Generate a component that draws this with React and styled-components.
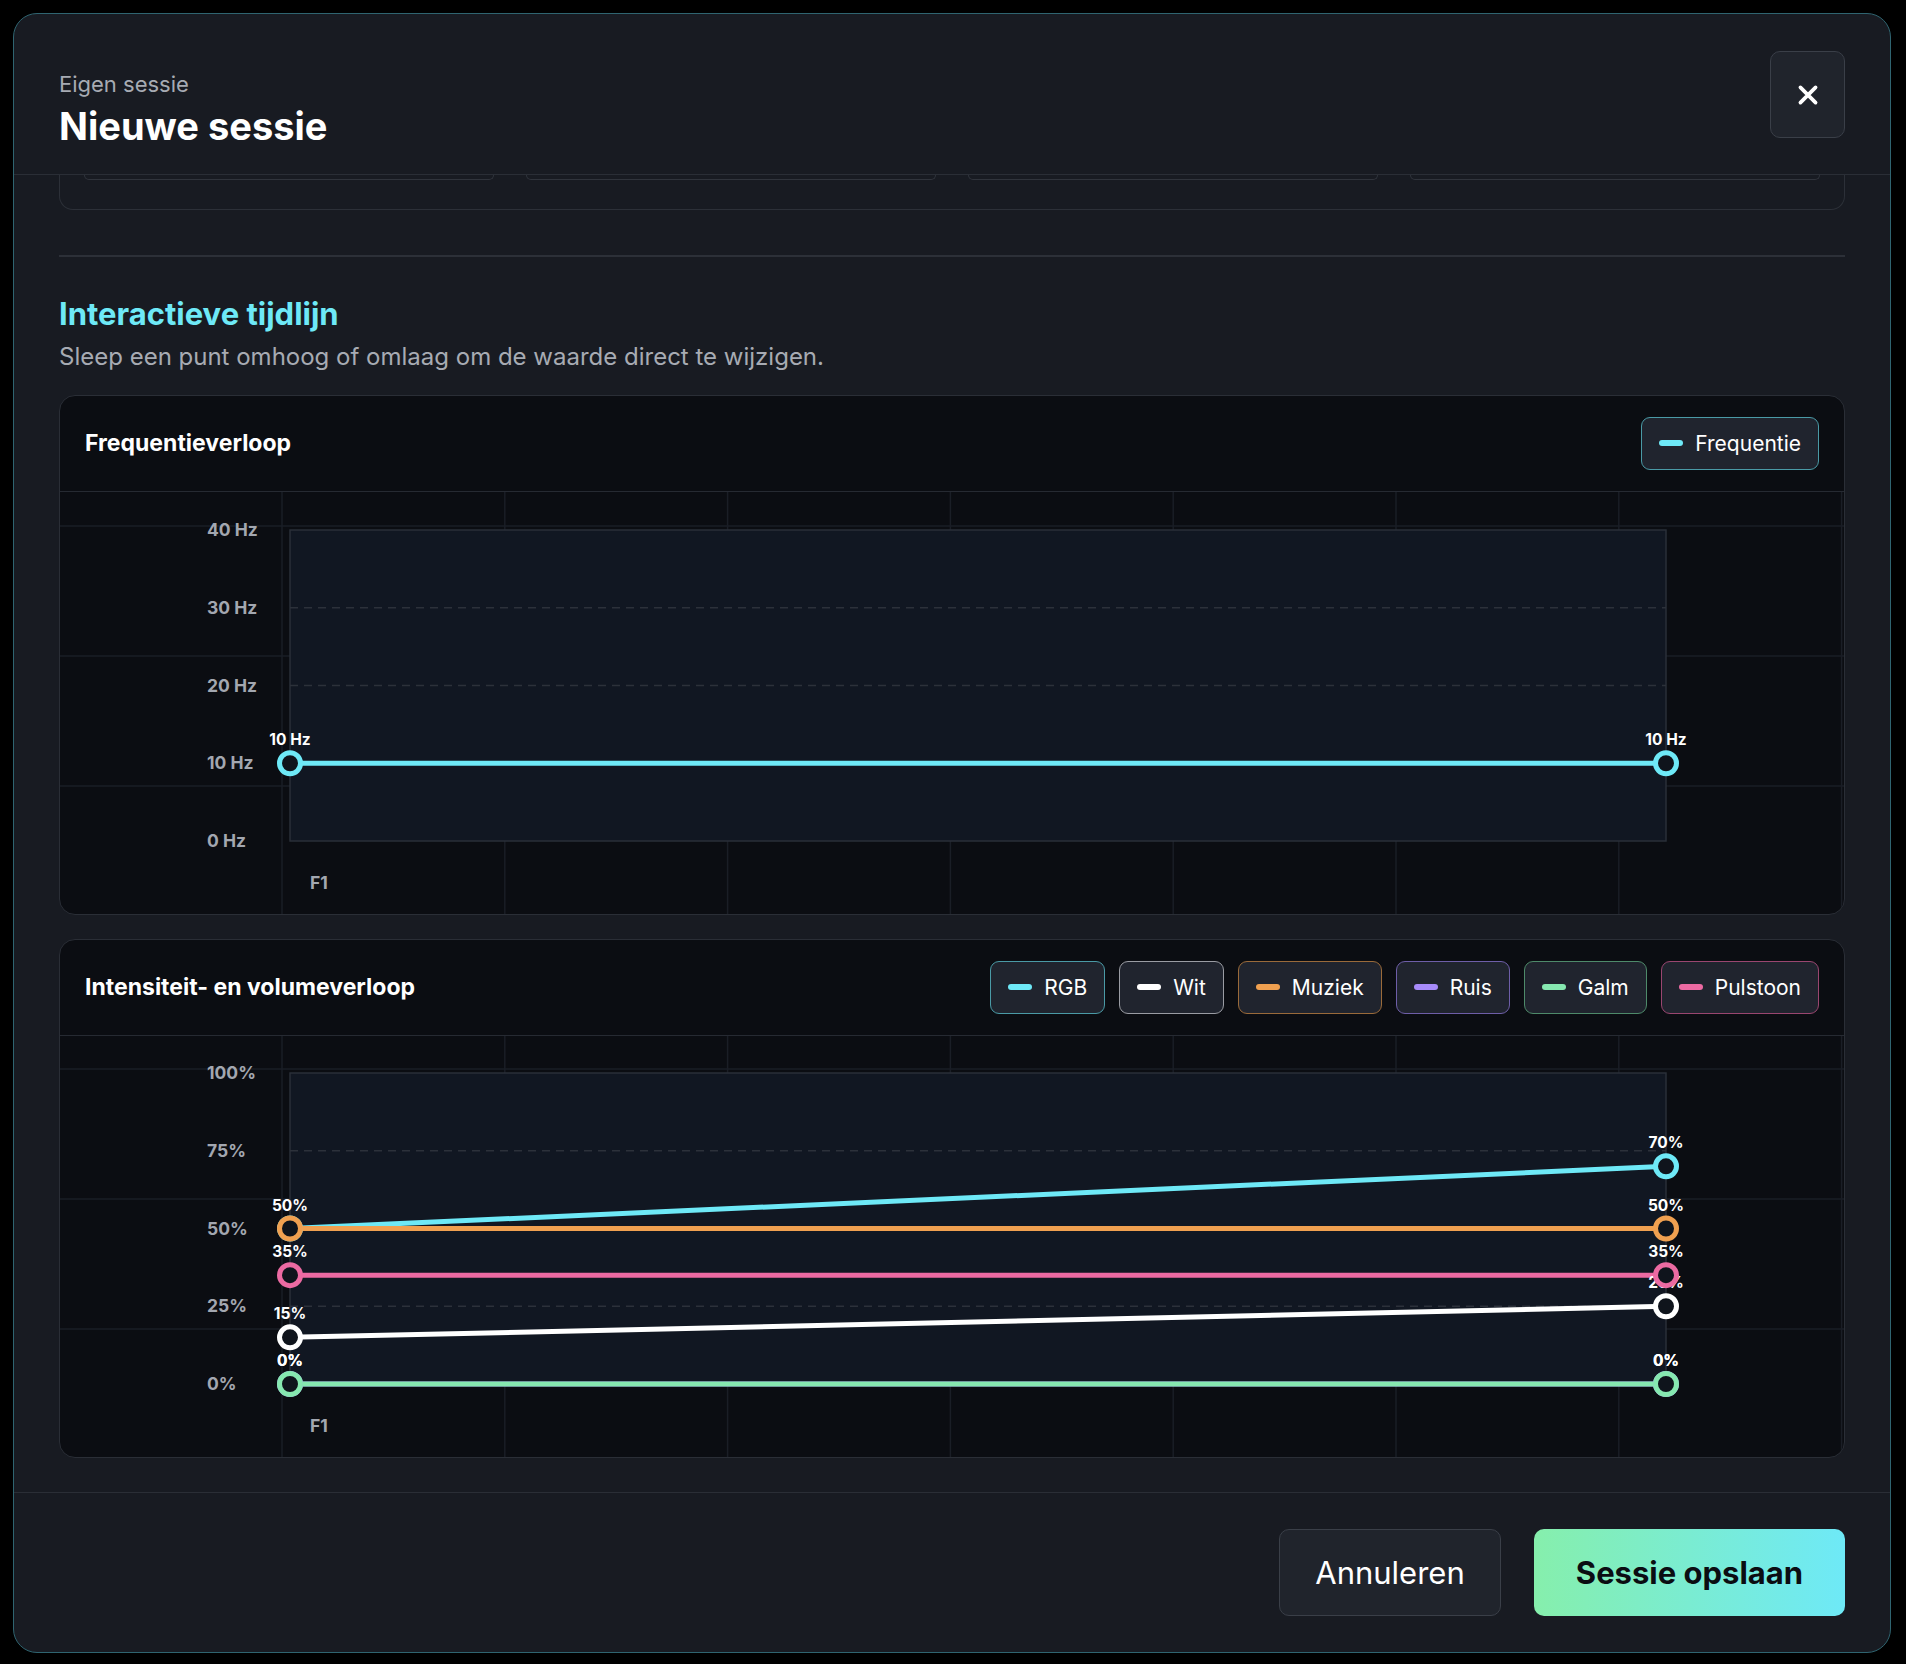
import styled, { createGlobalStyle } from 'styled-components';

const GlobalStyle = createGlobalStyle`
    html, body { margin: 0; background: #000; }
    body { font-family: Inter, "Noto Sans", sans-serif; color: #fff; }
`;

const W = 1787;
const PX0 = 230;
const PX1 = 1606;

const series = [
    { key: 'rgb', color: '#6ee9f7', from: 50, to: 70 },
    { key: 'ruis', color: '#a78bfa', from: 0, to: 0 },
    { key: 'galm', color: '#86e8b0', from: 0, to: 0 },
    { key: 'wit', color: '#ffffff', from: 15, to: 25 },
    { key: 'pulstoon', color: '#ec6aa2', from: 35, to: 35 },
    { key: 'muziek', color: '#f0a050', from: 50, to: 50 },
];

const legend = [
    { label: 'RGB', color: '#6ee9f7', border: '#4a9aa6' },
    { label: 'Wit', color: '#ffffff', border: '#9a9ca3' },
    { label: 'Muziek', color: '#f0a050', border: '#9a6a3a' },
    { label: 'Ruis', color: '#a78bfa', border: '#6e5ea8' },
    { label: 'Galm', color: '#86e8b0', border: '#4e8a6a' },
    { label: 'Pulstoon', color: '#ec6aa2', border: '#9a4670' },
];

function Grid({ height, top, bottom, ticks, x0label }) {
    const vLines = [];
    for (let x = 222; x < W; x += 222.8) vLines.push(x);
    const hLines = [];
    for (let y = top - 4; y < height; y += 130) hLines.push(y);
    const yOf = (f) => bottom - f * (bottom - top);
    return (
        <>
            {vLines.map((x) => (
                <line key={'v' + x} x1={x} x2={x} y1={0} y2={height} stroke="#1a1e26" strokeWidth="1.5" />
            ))}
            {hLines.map((y) => (
                <line key={'h' + y} x1={0} x2={W} y1={y} y2={y} stroke="#1a1e26" strokeWidth="1.5" />
            ))}
            <rect x={PX0} y={top} width={PX1 - PX0} height={bottom - top} fill="#111722" stroke="#2a2f38" strokeWidth="1.5" />
            {ticks.map((t, i) => {
                const f = i / (ticks.length - 1);
                const y = yOf(f);
                return (
                    <g key={t}>
                        {i > 0 && i < ticks.length - 1 && (
                            <line x1={PX0} x2={PX1} y1={y} y2={y} stroke="#2c313a" strokeDasharray="8 6" strokeWidth="1.5" />
                        )}
                        <text x={147} y={y + 6} fill="#a3a7b0" fontSize="17.5" fontWeight="700">{t}</text>
                    </g>
                );
            })}
            <text x={PX0 + 20} y={bottom + 48} fill="#a3a7b0" fontSize="17.5" fontWeight="700">{x0label}</text>
        </>
    );
}

function Point({ x, y, color, label }) {
    return (
        <g>
            <text x={x} y={y - 18} fill="#fff" fontSize="15.5" fontWeight="700" textAnchor="middle">{label}</text>
            <circle cx={x} cy={y} r="10.5" fill="#0f141c" stroke={color} strokeWidth="5" />
        </g>
    );
}

function FrequencyChart() {
    const h = 422, top = 38, bottom = 349;
    const y = bottom - 0.25 * (bottom - top);
    return (
        <svg width={W} height={h} style={{ display: 'block' }}>
            <Grid height={h} top={top} bottom={bottom} ticks={['0 Hz', '10 Hz', '20 Hz', '30 Hz', '40 Hz']} x0label="F1" />
            <line x1={PX0} x2={PX1} y1={y} y2={y} stroke="#6ee9f7" strokeWidth="5" />
            <Point x={PX0} y={y} color="#6ee9f7" label="10 Hz" />
            <Point x={PX1} y={y} color="#6ee9f7" label="10 Hz" />
        </svg>
    );
}

function IntensityChart() {
    const h = 421, top = 37, bottom = 348;
    const yOf = (v) => bottom - (v / 100) * (bottom - top);
    return (
        <svg width={W} height={h} style={{ display: 'block' }}>
            <Grid height={h} top={top} bottom={bottom} ticks={['0%', '25%', '50%', '75%', '100%']} x0label="F1" />
            {series.map((s) => (
                <line key={s.key} x1={PX0} x2={PX1} y1={yOf(s.from)} y2={yOf(s.to)} stroke={s.color} strokeWidth="5" />
            ))}
            {series.map((s) => (
                <g key={s.key}>
                    <Point x={PX0} y={yOf(s.from)} color={s.color} label={s.key === 'rgb' ? '' : s.from + '%'} />
                    <Point x={PX1} y={yOf(s.to)} color={s.color} label={s.to + '%'} />
                </g>
            ))}
        </svg>
    );
}

export default function App() {
    return (
        <>
            <GlobalStyle />
            <Page>
                <Modal>
                    <Header>
                        <div>
                            <Eyebrow>Eigen sessie</Eyebrow>
                            <Title>Nieuwe sessie</Title>
                        </div>
                        <CloseButton aria-label="Sluiten">
                            <svg width="26" height="26" viewBox="0 0 24 24" fill="none" stroke="#fff" strokeWidth="3.4" strokeLinecap="round">
                                <path d="M5 5l14 14M19 5L5 19" />
                            </svg>
                        </CloseButton>
                    </Header>

                    <Body>
                        <CutCard>
                            {[0, 1, 2, 3].map((i) => <CutInput key={i} />)}
                        </CutCard>
                        <Divider />

                        <SectionTitle>Interactieve tijdlijn</SectionTitle>
                        <SectionText>Sleep een punt omhoog of omlaag om de waarde direct te wijzigen.</SectionText>

                        <ChartCard>
                            <ChartHeader>
                                <ChartTitle>Frequentieverloop</ChartTitle>
                                <Legend>
                                    <Pill $border="#4a9aa6"><Swatch $color="#6ee9f7" />Frequentie</Pill>
                                </Legend>
                            </ChartHeader>
                            <FrequencyChart />
                        </ChartCard>

                        <ChartCard>
                            <ChartHeader>
                                <ChartTitle>Intensiteit- en volumeverloop</ChartTitle>
                                <Legend>
                                    {legend.map((l) => (
                                        <Pill key={l.label} $border={l.border}><Swatch $color={l.color} />{l.label}</Pill>
                                    ))}
                                </Legend>
                            </ChartHeader>
                            <IntensityChart />
                        </ChartCard>
                    </Body>

                    <Footer>
                        <GhostButton>Annuleren</GhostButton>
                        <PrimaryButton>Sessie opslaan</PrimaryButton>
                    </Footer>
                </Modal>
            </Page>
        </>
    );
}

const Page = styled.div`
    width: 1906px;
    height: 1664px;
    padding: 13px 15px 13px 13px;
    box-sizing: border-box;
`;

const Modal = styled.div`
    height: 100%;
    background: #181b22;
    border: 1.5px solid #2f6470;
    border-radius: 24px;
    display: flex;
    flex-direction: column;
    overflow: hidden;
`;

const Header = styled.div`
    height: 161px;
    box-sizing: border-box;
    padding: 37px 45px 0 45px;
    display: flex;
    justify-content: space-between;
    align-items: flex-start;
    border-bottom: 1.5px solid #2a2e36;
`;

const Eyebrow = styled.div`
    font-size: 22px;
    color: #a7abb3;
    margin-top: 20px;
`;

const Title = styled.div`
    font-size: 38px;
    font-weight: 700;
    margin-top: 6px;
`;

const CloseButton = styled.button`
    width: 75px;
    height: 87px;
    border-radius: 10px;
    background: #20242c;
    border: 1.5px solid #3a3f48;
    display: flex;
    align-items: center;
    justify-content: center;
`;

const Body = styled.div`
    flex: 1;
    padding: 0 45px;
    display: flex;
    flex-direction: column;
`;

const CutCard = styled.div`
    height: 34px;
    border: 1.5px solid #2c3038;
    border-top: none;
    border-radius: 0 0 14px 14px;
    display: grid;
    grid-template-columns: repeat(4, 1fr);
    gap: 32px;
    padding: 0 24px;
    align-items: start;
`;

const CutInput = styled.div`
    height: 4px;
    border: 1.5px solid #30343c;
    border-top: none;
    border-radius: 0 0 12px 12px;
`;

const Divider = styled.div`
    height: 1.5px;
    background: #2c3038;
    margin-top: 45px;
`;

const SectionTitle = styled.div`
    margin-top: 38px;
    font-size: 31px;
    font-weight: 700;
    color: #6ee9f7;
`;

const SectionText = styled.div`
    margin-top: 10px;
    font-size: 24px;
    color: #a7abb3;
`;

const ChartCard = styled.div`
    margin-top: 24px;
    background: #0b0d12;
    border: 1.5px solid #2a2e36;
    border-radius: 16px;
    overflow: hidden;
`;

const ChartHeader = styled.div`
    height: 96px;
    box-sizing: border-box;
    border-bottom: 1.5px solid #262a32;
    padding: 0 25px;
    display: flex;
    align-items: center;
    justify-content: space-between;
`;

const ChartTitle = styled.div`
    font-size: 23px;
    font-weight: 700;
`;

const Legend = styled.div`
    display: flex;
    gap: 14px;
`;

const Pill = styled.div`
    height: 53px;
    box-sizing: border-box;
    padding: 0 17px;
    border: 1.5px solid ${(p) => p.$border};
    border-radius: 9px;
    background: #20242e;
    display: flex;
    align-items: center;
    gap: 12px;
    font-size: 21px;
    color: #fff;
`;

const Swatch = styled.span`
    width: 24px;
    height: 6px;
    border-radius: 3px;
    background: ${(p) => p.$color};
`;

const Footer = styled.div`
    height: 160px;
    box-sizing: border-box;
    border-top: 1.5px solid #2a2e36;
    padding: 36px 45px 0;
    display: flex;
    justify-content: flex-end;
    align-items: flex-start;
    gap: 33px;
`;

const GhostButton = styled.button`
    width: 222px;
    height: 87px;
    border-radius: 10px;
    background: #20242c;
    border: 1.5px solid #3a3f48;
    color: #fff;
    font-family: inherit;
    font-size: 31px;
`;

const PrimaryButton = styled.button`
    width: 311px;
    height: 87px;
    border-radius: 10px;
    border: none;
    background: linear-gradient(90deg, #86efac, #6ee9f7);
    color: #0b0d12;
    font-family: inherit;
    font-size: 31px;
    font-weight: 700;
`;
